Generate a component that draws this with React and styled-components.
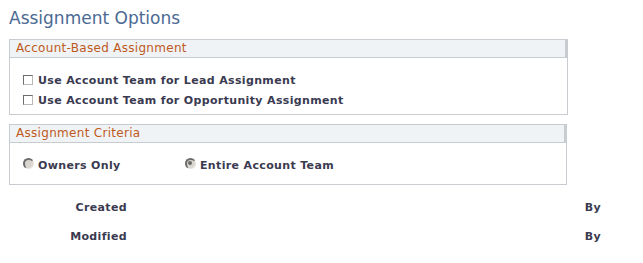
import React from "react";
import styled, { createGlobalStyle } from "styled-components";

const Global = createGlobalStyle`
  html, body { margin: 0; padding: 0; background: #ffffff; }
  body { font-family: "DejaVu Sans", Verdana, sans-serif; }
`;

const Page = styled.div`
  width: 643px;
  height: 263px;
  box-sizing: border-box;
  padding: 7px 0 0 9px;
`;

const Title = styled.h1`
  margin: 0 0 10px 0;
  font-size: 17px;
  line-height: 22px;
  font-weight: normal;
  color: #4b6a93;
`;

const Group = styled.section`
  width: ${(p) => p.$w}px;
  box-sizing: border-box;
  border: 1px solid #c8ccd1;
  margin-bottom: ${(p) => p.$gap || 0}px;
`;

const GroupHeader = styled.div`
  height: 18px;
  box-sizing: border-box;
  background: #eff3f5;
  border-bottom: 1px solid #c8ccd1;
  border-right: 2px solid #c8ccd1;
  padding-left: 6px;
  font-size: 12px;
  letter-spacing: 0.3px;
  line-height: 17px;
  color: #c0591d;
`;

const GroupBody = styled.div`
  display: flex;
  flex-direction: ${(p) => (p.$row ? "row" : "column")};
  padding: ${(p) => p.$pad};
`;

const Field = styled.label`
  display: flex;
  align-items: center;
  height: 20px;
  width: ${(p) => (p.$w ? `${p.$w}px` : "auto")};
  font-size: 11px;
  letter-spacing: 0.35px;
  font-weight: bold;
  color: #3a3a50;
`;

const Check = styled.span`
  display: inline-block;
  width: 10px;
  height: 10px;
  box-sizing: border-box;
  margin-right: 5px;
  border-top: 1px solid #6d6d6d;
  border-left: 1px solid #6d6d6d;
  border-right: 1px solid #b8b8b8;
  border-bottom: 1px solid #b8b8b8;
  background: #ffffff;
`;

const Radio = styled.span`
  position: relative;
  display: inline-block;
  width: 11px;
  height: 11px;
  box-sizing: border-box;
  margin-right: 4px;
  margin-top: -3px;
  border-radius: 50%;
  background: #d9d6d0;
  border-top: 2px solid #6a6a6a;
  border-left: 2px solid #6a6a6a;
  border-right: 1px solid #e8e6e2;
  border-bottom: 1px solid #e8e6e2;
  &::after {
    content: "";
    display: ${(p) => (p.$checked ? "block" : "none")};
    position: absolute;
    left: 1px;
    top: 1px;
    width: 4px;
    height: 4px;
    border-radius: 50%;
    background: #6a6a6a;
  }
`;

const Audit = styled.div`
  display: grid;
  grid-template-columns: 118px 1fr auto;
  width: 592px;
  margin-top: 13px;
  row-gap: 9px;
  font-size: 11px;
  letter-spacing: 0.35px;
  font-weight: bold;
  color: #3a3a50;
  line-height: 20px;
`;

const AuditLabel = styled.div`
  text-align: right;
`;

const AuditBy = styled.div`
  grid-column: 3;
`;

export default function App() {
  return (
    <>
      <Global />
      <Page>
        <Title>Assignment Options</Title>
        <Group $w={559} $gap={9}>
          <GroupHeader>Account-Based Assignment</GroupHeader>
          <GroupBody $pad="12px 0 4px 13px">
            <Field>
              <Check />
              Use Account Team for Lead Assignment
            </Field>
            <Field>
              <Check />
              Use Account Team for Opportunity Assignment
            </Field>
          </GroupBody>
        </Group>
        <Group $w={558}>
          <GroupHeader>Assignment Criteria</GroupHeader>
          <GroupBody $row $pad="12px 0 9px 13px">
            <Field $w={162}>
              <Radio />
              Owners Only
            </Field>
            <Field>
              <Radio $checked />
              Entire Account Team
            </Field>
          </GroupBody>
        </Group>
        <Audit>
          <AuditLabel>Created</AuditLabel>
          <AuditBy>By</AuditBy>
          <AuditLabel>Modified</AuditLabel>
          <AuditBy>By</AuditBy>
        </Audit>
      </Page>
    </>
  );
}
